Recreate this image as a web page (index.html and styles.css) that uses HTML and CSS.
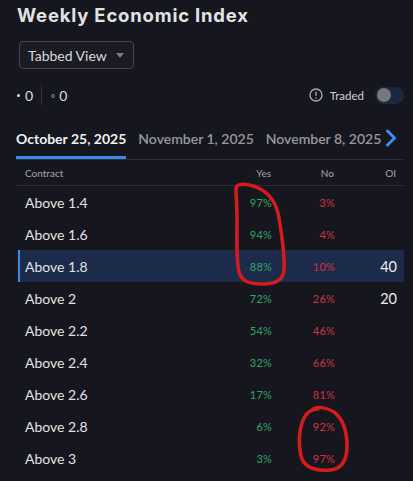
FILE: index.html
```html
<!DOCTYPE html>
<html>
<head>
<meta charset="utf-8">
<link rel="stylesheet" href="styles.css">
</head>
<body>
<div class="page">
  <h1 class="title">Weekly Economic Index</h1>
  <div class="dropdown"><span>Tabbed View</span><span class="caret"></span></div>
  <div class="status">
    <div class="counts">
      <span class="dot filled"></span><span class="num">0</span>
      <span class="sep"></span>
      <span class="dot hollow"></span><span class="num">0</span>
    </div>
    <div class="traded">
      <svg class="info" width="14" height="14" viewBox="0 0 14 14"><circle cx="7" cy="7" r="6" fill="none" stroke="#a9a9ae" stroke-width="1.3"/><line x1="7" y1="3.8" x2="7" y2="7.8" stroke="#a9a9ae" stroke-width="1.4"/><circle cx="7" cy="10" r="0.8" fill="#a9a9ae"/></svg>
      <span>Traded</span>
      <span class="toggle"><span class="knob"></span></span>
    </div>
  </div>
  <div class="tabs">
    <div class="tab active">October 25, 2025</div>
    <div class="tab">November 1, 2025</div>
    <div class="tab">November 8, 2025</div>
    <div class="chev"><svg width="12" height="18" viewBox="0 0 12 18"><path d="M2.5 2 L9.5 9 L2.5 16" fill="none" stroke="#3d8ef0" stroke-width="3" stroke-linecap="round" stroke-linejoin="round"/></svg></div>
  </div>
  <div class="thead">
    <span>Contract</span><span class="r">Yes</span><span class="r">No</span><span class="r">OI</span>
  </div>
  <div class="row"><span class="name">Above 1.4</span><span class="yes">97%</span><span class="no">3%</span><span class="oi"></span></div>
  <div class="row"><span class="name">Above 1.6</span><span class="yes">94%</span><span class="no">4%</span><span class="oi"></span></div>
  <div class="row sel"><span class="name">Above 1.8</span><span class="yes">88%</span><span class="no">10%</span><span class="oi">40</span></div>
  <div class="row"><span class="name">Above 2</span><span class="yes">72%</span><span class="no">26%</span><span class="oi">20</span></div>
  <div class="row"><span class="name">Above 2.2</span><span class="yes">54%</span><span class="no">46%</span><span class="oi"></span></div>
  <div class="row"><span class="name">Above 2.4</span><span class="yes">32%</span><span class="no">66%</span><span class="oi"></span></div>
  <div class="row"><span class="name">Above 2.6</span><span class="yes">17%</span><span class="no">81%</span><span class="oi"></span></div>
  <div class="row"><span class="name">Above 2.8</span><span class="yes">6%</span><span class="no">92%</span><span class="oi"></span></div>
  <div class="row"><span class="name">Above 3</span><span class="yes">3%</span><span class="no">97%</span><span class="oi"></span></div>
</div>
<svg class="marks" width="413" height="481" viewBox="0 0 413 481">
  <path d="M236 188 C238 182 252 184 262 190 C272 196 277 206 279 218 C282 236 285 254 284 270 C283 281 275 284 263 284 C250 284 242 282 239 272 C236 258 237 238 237 220 C237 206 236 196 236 188" fill="none" stroke="#d51c1c" stroke-width="3.5" stroke-linecap="round"/>
  <path d="M312 410 C316 406 326 407 334 412 C343 419 347 432 347 446 C347 460 342 469 330 470 C316 471 304 468 301 456 C298 444 299 428 304 418 C307 412 312 409 318 409" fill="none" stroke="#d51c1c" stroke-width="3.5" stroke-linecap="round"/>
</svg>
</body>
</html>
```
FILE: styles.css
```css
* { box-sizing: border-box; }
html, body { margin: 0; padding: 0; }
body {
  background: #16171e;
  color: #e4e4e6;
  font-family: "Lato", "Liberation Sans", sans-serif;
  width: 413px;
  height: 481px;
  overflow: hidden;
  position: relative;
}
.page { padding: 0 9px 0 16px; }
.title {
  margin: 4px 0 0 1px;
  font-family: "Inter", "Lato", sans-serif;
  font-size: 18.5px;
  letter-spacing: 0.8px;
  line-height: 22px;
  font-weight: 700;
  color: #e2e2e4;
}
.dropdown {
  margin: 15px 0 0 3px;
  width: 115px;
  height: 28px;
  border: 1px solid #45464d;
  border-radius: 4px;
  background: #1b1c23;
  display: flex;
  align-items: center;
  justify-content: space-between;
  padding: 0 9px 0 8px;
  font-size: 14px;
  color: #d8d8da;
}
.caret {
  width: 0; height: 0;
  border-left: 4.5px solid transparent;
  border-right: 4.5px solid transparent;
  border-top: 5px solid #7d7e84;
}
.status {
  margin-top: 16px;
  height: 20px;
  display: flex;
  align-items: center;
  justify-content: space-between;
}
.counts { display: flex; align-items: center; font-size: 14px; color: #dcdcde; }
.dot { display: inline-block; border-radius: 50%; }
.dot.filled { width: 3px; height: 3px; background: #dcdcde; margin: 1px 5px 0 1px; }
.dot.hollow { width: 4px; height: 4px; border: 1px solid #8a8a90; margin: 1px 4px 0 0; }
.sep { width: 1px; height: 20px; background: #34353c; margin: 0 9px 0 8px; }
.traded { display: flex; align-items: center; font-size: 11.5px; color: #d2d2d4; }
.info { margin-right: 7px; }
.toggle {
  margin-left: 11px;
  width: 29px; height: 17px;
  border-radius: 9px;
  background: #1b2740;
  display: flex; align-items: center;
  padding-left: 2px;
}
.knob { width: 14px; height: 14px; border-radius: 50%; background: #77787e; }
.tabs {
  margin-top: 19px;
  height: 36px;
  display: flex;
  gap: 12px;
  border-bottom: 1px solid #2c2d35;
  overflow: hidden;
  position: relative;
  white-space: nowrap;
}
.tab {
  font-size: 14px;
  line-height: 30px;
  color: #97979d;
  font-weight: 600;
}
.tab.active {
  color: #f0f0f2;
  font-weight: 700;
  border-bottom: 3px solid #3a8be6;
}
.chev {
  position: absolute;
  right: 0;
  top: 5px;
  width: 19px;
  height: 20px;
  background: #16171e;
}
.thead, .row {
  display: grid;
  grid-template-columns: 1fr 60px 63px 62px;
  align-items: center;
  padding: 0 7px 0 5px;
  border-left: 2px solid transparent;
  margin-left: 2px;
}
.thead {
  height: 26px;
  font-size: 10px;
  color: #a4a4aa;
  border-bottom: 1px solid #2c2d35;
  margin-left: 0;
  padding-left: 7px;
  padding-right: 8px;
}
.r { text-align: right; }
.row { height: 32px; }
.row.sel { background: #1d2b4b; border-left-color: #3a8be6; }
.name { font-size: 14px; color: #e2e2e4; }
.yes, .no, .oi { text-align: right; }
.yes { font-size: 11px; letter-spacing: 0.2px; color: #2ea567; }
.no { font-size: 11px; letter-spacing: 0.2px; color: #cf3146; }
.oi { font-size: 14.5px; color: #ececee; }
.marks { position: absolute; left: 0; top: 0; pointer-events: none; }
```
